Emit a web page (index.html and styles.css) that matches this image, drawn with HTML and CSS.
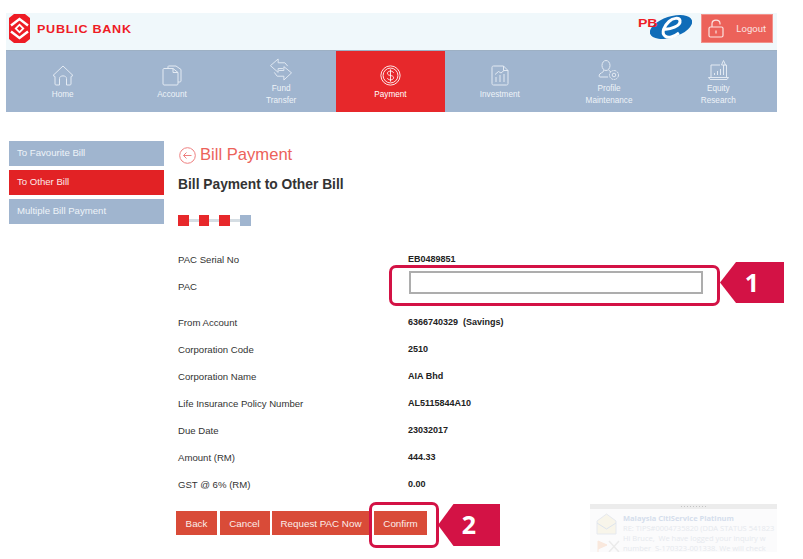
FILE: index.html
```html
<!DOCTYPE html>
<html lang="en">
<head>
    <meta charset="UTF-8">
    <meta name="viewport" content="width=device-width, initial-scale=1.0">
    <link rel="stylesheet" href="styles.css">
    <title>Public Bank - Bill Payment</title>
</head>
<body>
    <div class="shell">
        <div class="topbar">
            <div class="brand">
                <svg class="brandMark" width="21" height="29" viewBox="0 0 21 29">
                    <path d="M5 0H16L21 4V25L16 29H5L0 25V4Z" fill="#ee1c25"/>
                    <path d="M2 11.500L10.500 5L19 11.500M2 17.500L10.500 24L19 17.500" fill="none" stroke="#fff" stroke-width="2.400"/>
                    <path d="M10.500 9.500L15.500 14.500L10.500 19.500L5.500 14.500Z" fill="#fff"/>
                    <path d="M10.500 12L13 14.500L10.500 17L8 14.500Z" fill="#ee1c25"/>
                </svg>
                <span class="brandName">PUBLIC BANK</span>
            </div>
            <div class="topRight">
                <div class="pbe">
                    <span class="pbeText">PB</span>
                    <svg width="42" height="26" viewBox="0 0 42 26">
                        <ellipse cx="21" cy="13" rx="22" ry="10.500" transform="rotate(-18 21 13)" fill="#0f6cb8"/>
                        <path d="M13 15C20 16 31 12 30 6.500C29 3 23 4 19 7.500C14 12 11 19 15 22C18 24.500 24 23 29 19" fill="none" stroke="#fff" stroke-width="3"/>
                    </svg>
                </div>
                <div class="logout">
                    <svg width="16" height="19" viewBox="0 0 16 19" fill="none" stroke="#fbe3e0" stroke-width="1.200">
                        <rect x="1" y="8" width="14" height="10" rx="1.500"/>
                        <path d="M4 8V4.500C4 0 12 0 12 4.500V5.500"/>
                        <path d="M8 11.500V14.500"/>
                    </svg>
                    <span>Logout</span>
                </div>
            </div>
        </div>

        <div class="nav">
            <div class="navItem">
                <svg width="22" height="21" viewBox="0 0 22 21" class="navIcon">
                    <path d="M1 10.500L11 1L21 10.500L19 11.500V19C19 19.700 18.500 20 18 20H14.500V13.500C14.500 10 7.500 10 7.500 13.500V20H4C3.500 20 3 19.700 3 19V11.500Z"/>
                </svg>
                <span>Home</span>
            </div>
            <div class="navItem">
                <svg width="20" height="21" viewBox="0 0 20 21" class="navIcon">
                    <path d="M6 3V1.500C6 1 6.500 1 7 1H14L19 4.500V16C19 16.500 18.500 17 18 17H16"/>
                    <path d="M2 3.500H11L16 7.500V19C16 19.500 15.500 20 15 20H2C1.500 20 1 19.500 1 19V4.500C1 4 1.500 3.500 2 3.500Z"/>
                    <path d="M11 3.500V7.500H16"/>
                </svg>
                <span>Account</span>
            </div>
            <div class="navItem navTall">
                <svg width="24" height="23" viewBox="0 0 24 24" class="navIcon">
                    <path d="M9 1L1 8L9 15V11H14M9 1V5H16L19 8.500"/>
                    <path d="M15 9L23 15.500L15 23V19H8L5 15M15 9V13H10"/>
                </svg>
                <span>Fund<br>Transfer</span>
            </div>
            <div class="navItem navActive">
                <svg width="21" height="21" viewBox="0 0 24 24" class="navIcon">
                    <circle cx="12" cy="12" r="11"/>
                    <circle cx="12" cy="12" r="8.500"/>
                    <path d="M15.500 9C15 7.500 13.500 7 12 7C10 7 8.500 8 8.500 9.500C8.500 13 15.500 11 15.500 14.500C15.500 16 14 17 12 17C10.500 17 9 16.500 8.500 15M12 5V19"/>
                </svg>
                <span>Payment</span>
            </div>
            <div class="navItem">
                <svg width="18" height="21" viewBox="0 0 18 21" class="navIcon">
                    <path d="M2.500 1H12.500L17 5.500V18.500C17 19.500 16.500 20 15.500 20H2.500C1.500 20 1 19.500 1 18.500V2.500C1 1.500 1.500 1 2.500 1Z"/>
                    <path d="M12.500 1V5.500H17"/>
                    <path d="M5 17V12M9 17V10M13 17V9"/>
                    <path d="M4 9.500L7.500 6.500L10 8L13 5.500"/>
                </svg>
                <span>Investment</span>
            </div>
            <div class="navItem navTall">
                <svg width="22" height="23" viewBox="0 -2 22 23" class="navIcon">
                    <ellipse cx="8" cy="5.500" rx="4" ry="5"/>
                    <path d="M6 10C6 13 1 12.500 1 16C1 16.500 1.500 17 2 17H10"/>
                    <path d="M10.500 10L13 12"/>
                    <circle cx="16" cy="15" r="4.500" stroke-dasharray="2 0.600"/>
                    <circle cx="16" cy="15" r="1.800"/>
                </svg>
                <span>Profile<br>Maintenance</span>
            </div>
            <div class="navItem navTall">
                <svg width="21" height="23" viewBox="0 -2 21 23" class="navIcon">
                    <path d="M3 17V5H12M16.500 5H18.500V17"/>
                    <path d="M0.500 17.500H20.500L19 19.500H2Z"/>
                    <path d="M6.500 15V13M9.500 15V11M12.500 15V9M15.500 15V5"/>
                    <path d="M15.500 0.500L17.500 5H13.500Z"/>
                </svg>
                <span>Equity<br>Research</span>
            </div>
        </div>

        <div class="main">
            <div class="sidebar">
                <div class="sideItem">To Favourite Bill</div>
                <div class="sideItem sideActive">To Other Bill</div>
                <div class="sideItem">Multiple Bill Payment</div>
            </div>

            <div class="content">
                <div class="pageTitle">
                    <svg width="17" height="17" viewBox="0 0 17 17" fill="none" stroke="#ee8080" stroke-width="1">
                        <circle cx="8.500" cy="8.500" r="7.800"/>
                        <path d="M12.500 8.500H4.500M7.500 5.500L4.500 8.500L7.500 11.500"/>
                    </svg>
                    <span>Bill Payment</span>
                </div>
                <div class="subTitle">Bill Payment to Other Bill</div>

                <div class="steps">
                    <span class="step stepDone"></span>
                    <span class="stepLine"></span>
                    <span class="step stepDone"></span>
                    <span class="stepLine"></span>
                    <span class="step stepDone"></span>
                    <span class="stepLine"></span>
                    <span class="step"></span>
                </div>

                <div class="rows">
                    <div class="row"><div class="label">PAC Serial No</div><div class="value">EB0489851</div></div>
                    <div class="row rowPac"><div class="label">PAC</div><input class="pacInput" type="text"></div>
                    <div class="row"><div class="label">From Account</div><div class="value">6366740329&nbsp; (Savings)</div></div>
                    <div class="row"><div class="label">Corporation Code</div><div class="value">2510</div></div>
                    <div class="row"><div class="label">Corporation Name</div><div class="value">AIA Bhd</div></div>
                    <div class="row"><div class="label">Life Insurance Policy Number</div><div class="value">AL5115844A10</div></div>
                    <div class="row"><div class="label">Due Date</div><div class="value">23032017</div></div>
                    <div class="row"><div class="label">Amount (RM)</div><div class="value">444.33</div></div>
                    <div class="row"><div class="label">GST @ 6% (RM)</div><div class="value">0.00</div></div>
                </div>

                <div class="buttons">
                    <button class="btn btnBack">Back</button>
                    <button class="btn btnCancel">Cancel</button>
                    <button class="btn btnRequest">Request PAC Now</button>
                    <button class="btn btnConfirm">Confirm</button>
                </div>
            </div>
        </div>
    </div>

    <!-- annotations and the popup sit over the page -->
    <div class="ring ringPac"></div>
    <div class="tag tagPac">1</div>
    <div class="ring ringConfirm"></div>
    <div class="tag tagConfirm">2</div>

    <div class="toast">
        <div class="toastBar"><span class="toastGrip"></span></div>
        <div class="toastBody">
            <svg class="toastIcon" width="24" height="40" viewBox="0 0 24 40">
                <path d="M1 8L10.500 1L20 8V21H1Z" fill="#f8f5ea" stroke="#e6e9ef"/>
                <path d="M1 10L10.500 16L20 10" fill="none" stroke="#dde4ee"/>
                <path d="M2 28V39M2 28L11 32L2 36" fill="#f9e8dd" stroke="#f9e8dd"/>
                <path d="M13 28L23 39M23 28L13 39" stroke="#ebebeb" stroke-width="1.500"/>
            </svg>
            <div class="toastText">
                <div class="toastFrom">Malaysia CitiService Platinum</div>
                <div>RE: TIPS#0004735820 (DDA STATUS 541823</div>
                <div>Hi Bruce,&nbsp; We have logged your inquiry w</div>
                <div>number&nbsp; S-170323-001338. We will check</div>
            </div>
        </div>
    </div>
</body>
</html>
```

FILE: styles.css
```css
body{
    margin: 0;
    background-color: white;
    font-family: "Liberation Sans", Arial, sans-serif;
    overflow: hidden;
}

.shell{
    width: 771px;
    height: 559px;
    margin-left: 6px;
    padding-top: 13px;
    box-sizing: border-box;
}

.topbar{
    display: flex;
    justify-content: space-between;
    align-items: flex-start;
    height: 37px;
    background-color: #f0f8fb;
}

.brand{
    display: flex;
    align-items: center;
    gap: 7px;
    padding: 1px 0 0 3px;
}

.brandName{
    font-size: 10.500px;
    font-weight: bold;
    letter-spacing: 0.6px;
    color: #ee1c25;
    transform: scaleX(1.2);
    transform-origin: left;
}

.topRight{
    display: flex;
    align-items: flex-start;
    gap: 9px;
    padding: 1px 4px 0 0;
}

.pbe{
    display: flex;
    align-items: flex-start;
}

.pbeText{
    font-size: 10.500px;
    font-weight: bold;
    color: #ee1c25;
    margin: 3px -8px 0 2px;
    transform: scaleX(1.35);
    transform-origin: right;
}

.logout{
    display: flex;
    align-items: center;
    justify-content: space-between;
    box-sizing: border-box;
    width: 72px;
    height: 29px;
    padding: 0 6px 0 6px;
    border: 1px solid #f2928b;
    background-color: #ec625a;
    color: #fbe3e0;
    font-family: Roboto, sans-serif;
    font-size: 9.500px;
}

.nav{
    display: grid;
    grid-template-columns: repeat(7, 1fr);
    height: 62px;
    padding: 0 4px 0 2px;
    background-color: #a0b5cf;
    border-top: 1px solid #9db0c4;
    box-sizing: border-box;
}

.navItem{
    display: flex;
    flex-direction: column;
    align-items: center;
    padding-top: 14px;
    box-sizing: border-box;
    color: #eef3f8;
    font-size: 8.200px;
    line-height: 12px;
    text-align: center;
}

.navIcon{
    fill: none;
    stroke: #e3eaf3;
    stroke-width: 1;
    margin-bottom: 3px;
}

.navTall{
    padding-top: 7px;
}

.navTall .navIcon{
    margin-bottom: 2px;
}

.navActive{
    background-color: #e7282b;
    color: white;
}

.navActive .navIcon{
    stroke: white;
}

.main{
    display: flex;
    padding-top: 29px;
}

.sidebar{
    display: flex;
    flex-direction: column;
    gap: 4px;
    width: 155px;
    margin-left: 3px;
}

.sideItem{
    height: 25px;
    line-height: 24px;
    padding-left: 8px;
    background-color: #a0b5cf;
    color: #eef3f8;
    font-size: 9.600px;
}

.sideActive{
    background-color: #e22225;
    color: #fbe9e9;
}

.content{
    margin-left: 14px;
    width: 590px;
}

.pageTitle{
    display: flex;
    align-items: center;
    gap: 4px;
    height: 28px;
    padding-left: 1px;
    color: #ec625a;
    font-size: 16.600px;
}

.subTitle{
    margin-top: 8px;
    height: 16px;
    line-height: 16px;
    font-size: 13.800px;
    font-weight: bold;
    color: #333;
}

.steps{
    display: flex;
    align-items: center;
    margin-top: 22px;
}

.step{
    width: 10.500px;
    height: 10.500px;
    background-color: #a0b5cf;
}

.stepDone{
    background-color: #e7282b;
}

.stepLine{
    width: 10.200px;
    height: 3px;
    background-color: #d5dde3;
}

.rows{
    margin-top: 20px;
}

.row{
    display: flex;
    align-items: center;
    height: 27px;
    font-size: 9.600px;
    color: #333;
}

.rowPac{
    height: 36px;
    padding-bottom: 9px;
    box-sizing: border-box;
}

.label{
    width: 230px;
}

.value{
    font-size: 9px;
    font-weight: bold;
    color: #222;
}

.pacInput{
    box-sizing: border-box;
    width: 294px;
    height: 23px;
    margin: 0 0 8px 1px;
    border: 2px solid #adadad;
    background-color: white;
}

.buttons{
    display: flex;
    margin-top: 13.500px;
    margin-left: -2px;
    gap: 2.500px;
}

.btn{
    height: 24px;
    padding: 0;
    border: none;
    background-color: #d94b38;
    color: #fbeeea;
    font-family: "Liberation Sans", Arial, sans-serif;
    font-size: 9.800px;
}

.btnBack{
    width: 41px;
}

.btnCancel{
    width: 50px;
}

.btnRequest{
    width: 98px;
}

.btnConfirm{
    width: 53px;
    margin-left: 1.500px;
}

.ring{
    position: absolute;
    box-sizing: border-box;
    border: 3px solid #d31245;
    border-radius: 7px;
}

.ringPac{
    left: 389px;
    top: 265px;
    width: 331px;
    height: 41px;
}

.ringConfirm{
    left: 369px;
    top: 502px;
    width: 70px;
    height: 46px;
}

.tag{
    position: absolute;
    display: flex;
    align-items: center;
    justify-content: center;
    box-sizing: border-box;
    padding-bottom: 2px;
    background-color: #d31245;
    color: white;
    font-family: "Open Sans", sans-serif;
    font-weight: bold;
    font-size: 25px;
    clip-path: polygon(25% 0, 100% 0, 100% 100%, 25% 100%, 0 50%);
}

.tagPac{
    left: 720px;
    top: 262px;
    width: 64px;
    height: 41px;
}

.tagConfirm{
    left: 438px;
    top: 504px;
    width: 62px;
    height: 42px;
}

.toast{
    position: absolute;
    left: 590px;
    top: 504px;
    width: 187px;
    height: 48px;
    overflow: hidden;
    background-color: #fbfbfc;
}

.toastBar{
    display: flex;
    justify-content: center;
    align-items: center;
    height: 5px;
    background-color: #ececec;
}

.toastGrip{
    width: 25px;
    height: 1px;
    margin-left: 19px;
    background-image: repeating-linear-gradient(90deg, #c4c4c4 0 1px, transparent 1px 3px);
}

.toastBody{
    display: flex;
    gap: 3px;
    padding: 4px 0 0 6px;
}

.toastIcon{
    flex-shrink: 0;
}

.toastText{
    font-family: "Open Sans", sans-serif;
    font-size: 7.500px;
    line-height: 10px;
    color: #e6e9ee;
    white-space: nowrap;
}

.toastFrom{
    font-weight: bold;
    color: #d5deec;
}
```
